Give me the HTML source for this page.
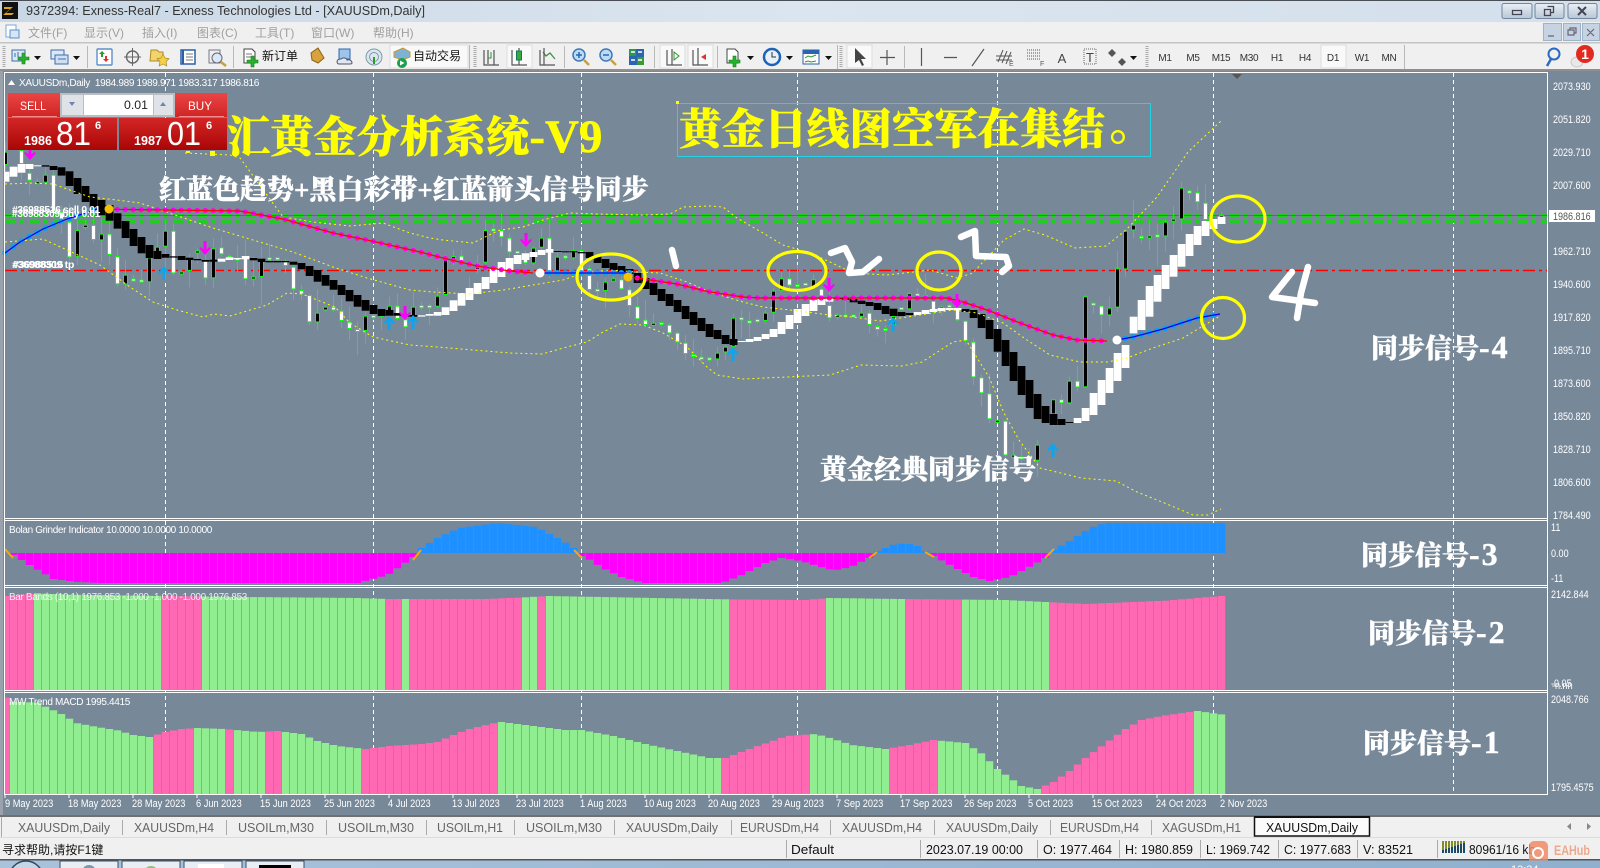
<!DOCTYPE html>
<html><head><meta charset="utf-8"><title>XAUUSDm,Daily</title>
<style>
html,body{margin:0;padding:0;background:#778899;width:1600px;height:868px;overflow:hidden}
svg{position:absolute;left:0;top:0;display:block}
text{font-family:"Liberation Sans","Noto Sans CJK SC",sans-serif;white-space:pre}
.m{font-size:12px;fill:#a0a0a0}
.tb{font-size:10px;fill:#333;text-anchor:middle;letter-spacing:-.3px}
.ax{font-size:11px;fill:#fff}
.dt{font-size:11px;fill:#fff}
.tab{font-size:13px;fill:#666}
.st{font-size:13px;fill:#111}
.lb{font-size:10px;fill:#fff;letter-spacing:-.35px}
.big{font-family:"Liberation Serif","Noto Serif CJK SC",serif;font-weight:900}
.w26{font-size:27px;fill:#fff;stroke:#fff;stroke-width:.4px}
.y42{font-size:43.200px;fill:#ff0;stroke:#ff0;stroke-width:.5px}
.dg{font-size:32px;letter-spacing:2px}
</style></head><body>
<svg width="1600" height="868" viewBox="0 0 1600 868">
<defs>
<linearGradient id="tg" x1="0" x2="1" y1="0" y2="0"><stop offset="0" stop-color="#c9d7e5"/><stop offset=".5" stop-color="#dbe5ef"/><stop offset="1" stop-color="#d3dfeb"/></linearGradient>
<linearGradient id="bt" x1="0" x2="0" y1="0" y2="1"><stop offset="0" stop-color="#e9eff5"/><stop offset="1" stop-color="#b8c6d6"/></linearGradient>
<linearGradient id="rd" x1="0" x2="0" y1="0" y2="1"><stop offset="0" stop-color="#ea4545"/><stop offset="1" stop-color="#cf2424"/></linearGradient>
<linearGradient id="rp" x1="0" x2="0" y1="0" y2="1"><stop offset="0" stop-color="#d42626"/><stop offset="1" stop-color="#a90606"/></linearGradient>
<linearGradient id="tk" x1="0" x2="1" y1="0" y2="0"><stop offset="0" stop-color="#a9c3dc"/><stop offset="1" stop-color="#8fb0cf"/></linearGradient>
</defs>

<!-- chart background -->
<rect x="0" y="70" width="1600" height="747" fill="#778899"/>
<rect x="0" y="70" width="3" height="747" fill="#9aa3ad"/>

<!-- generated chart geometry -->
<g id="chart"></g>

<!-- frame lines -->
<g stroke="#fff" stroke-width="1" fill="none">
<path d="M4 72.5H1548M4 518.5H1548M4 520.5H1548M4 585.5H1548M4 587.5H1548M4 690.5H1548M4 692.5H1548M4 794.5H1548M4.5 72V795M1547.5 72V795"/>
</g>
<path d="M1232 74h10l-5 5z" fill="#555"/>

<!-- handwritten numerals -->
<g fill="none" stroke="#fff" stroke-width="6.5" stroke-linecap="round" stroke-linejoin="round">
<path d="M672 250L676 266"/>
<path d="M831 253L845 248L852 262L849 273L863 272L879 259"/>
<path d="M961 237L975 231L976 256L1006 257L1009 266L1002 272"/>
<path d="M1292 272L1272 297L1315 303M1308 267L1301 293L1297 318"/>
</g>

<!-- yellow circles -->
<g fill="none" stroke="#ff0" stroke-width="3.2">
<ellipse cx="611" cy="277" rx="34" ry="23"/>
<ellipse cx="797" cy="271" rx="29" ry="19.5"/>
<ellipse cx="939" cy="271" rx="22" ry="19"/>
<ellipse cx="1238" cy="219" rx="27" ry="23"/>
<ellipse cx="1223" cy="318" rx="21.5" ry="20.5"/>
</g>

<!-- big overlay text -->
<rect x="186" y="151" width="4" height="2" fill="#ff0"/><rect x="210" y="151" width="5" height="5" fill="#ff0"/>
<text class="big y42" x="227" y="152">汇黄金分析系统<tspan font-size="47">-V9</tspan></text>
<rect x="677.5" y="103.5" width="473" height="53" fill="none" stroke="#22d3e6" stroke-width="1"/>
<rect x="676" y="101" width="3" height="3" fill="#ff0"/>
<text class="big y42" x="679" y="144" style="font-size:42.600px">黄金日线图空军在集结</text>
<text x="1109" y="141" font-size="46" fill="#ff0" style="font-family:'Noto Sans CJK SC',sans-serif">。</text>
<text class="big w26" x="159" y="199">红蓝色趋势+黑白彩带+红蓝箭头信号同步</text>
<text class="big w26" x="820" y="479">黄金经典同步信号</text>
<text class="big w26" x="1371" y="358">同步信号<tspan class="dg">-4</tspan></text>
<text class="big w26" x="1361" y="565">同步信号<tspan class="dg">-3</tspan></text>
<text class="big w26" x="1368" y="643">同步信号<tspan class="dg">-2</tspan></text>
<text class="big w26" x="1363" y="753">同步信号<tspan class="dg">-1</tspan></text>

<!-- chart labels -->
<path d="M8 85l3.5-5 3.5 5z" fill="#fff"/>
<text class="lb" x="19" y="86" textLength="240" lengthAdjust="spacingAndGlyphs">XAUUSDm,Daily  1984.989 1989.971 1983.317 1986.816</text>
<text class="lb" x="9" y="533" textLength="203" lengthAdjust="spacingAndGlyphs">Bolan Grinder Indicator 10.0000 10.0000 10.0000</text>
<text class="lb" x="9" y="600" textLength="238" lengthAdjust="spacingAndGlyphs" fill-opacity=".85">Bar Bands (10,1) 1976.853 -1.000 -1.000 -1.000 1976.853</text>
<text class="lb" x="9" y="705" textLength="121" lengthAdjust="spacingAndGlyphs">MW Trend MACD 1995.4415</text>
<text class="lb" x="12" y="213" font-weight="bold" textLength="88" lengthAdjust="spacingAndGlyphs">#36988516 sell 0.01</text>
<text class="lb" x="12" y="217" font-weight="bold" textLength="88" lengthAdjust="spacingAndGlyphs">#36988309 buy 0.01</text>
<text class="lb" x="12" y="268" font-weight="bold" textLength="62" lengthAdjust="spacingAndGlyphs">#36988309 tp</text>
<text class="lb" x="13" y="268" font-weight="bold" textLength="50" lengthAdjust="spacingAndGlyphs">#36988516</text>

<!-- price axis -->
<g>
<text class="ax" x="1553" y="90">2073.930</text>
<text class="ax" x="1553" y="123">2051.820</text>
<text class="ax" x="1553" y="156">2029.710</text>
<text class="ax" x="1553" y="189">2007.600</text>
<text class="ax" x="1553" y="255">1962.710</text>
<text class="ax" x="1553" y="288">1940.600</text>
<text class="ax" x="1553" y="321">1917.820</text>
<text class="ax" x="1553" y="354">1895.710</text>
<text class="ax" x="1553" y="387">1873.600</text>
<text class="ax" x="1553" y="420">1850.820</text>
<text class="ax" x="1553" y="453">1828.710</text>
<text class="ax" x="1553" y="486">1806.600</text>
<text class="ax" x="1553" y="519">1784.490</text>
<rect x="1549" y="210" width="46" height="12" fill="#fff"/>
<text class="ax" x="1553" y="220" style="fill:#555">1986.816</text>
<text class="ax" x="1551" y="531">11</text>
<text class="ax" x="1551" y="557">0.00</text>
<text class="ax" x="1551" y="582">-11</text>
<text class="ax" x="1551" y="598">2142.844</text>
<text class="ax" x="1551" y="687">-0.05</text>
<text class="ax" x="1552" y="689">-n.nn</text>
<text class="ax" x="1551" y="703">2048.766</text>
<text class="ax" x="1551" y="791">1795.4575</text>
</g>

<!-- date axis -->
<text class="dt" x="5" y="807">9 May 2023</text>
<text class="dt" x="68" y="807">18 May 2023</text>
<text class="dt" x="132" y="807">28 May 2023</text>
<text class="dt" x="196" y="807">6 Jun 2023</text>
<text class="dt" x="260" y="807">15 Jun 2023</text>
<text class="dt" x="324" y="807">25 Jun 2023</text>
<text class="dt" x="388" y="807">4 Jul 2023</text>
<text class="dt" x="452" y="807">13 Jul 2023</text>
<text class="dt" x="516" y="807">23 Jul 2023</text>
<text class="dt" x="580" y="807">1 Aug 2023</text>
<text class="dt" x="644" y="807">10 Aug 2023</text>
<text class="dt" x="708" y="807">20 Aug 2023</text>
<text class="dt" x="772" y="807">29 Aug 2023</text>
<text class="dt" x="836" y="807">7 Sep 2023</text>
<text class="dt" x="900" y="807">17 Sep 2023</text>
<text class="dt" x="964" y="807">26 Sep 2023</text>
<text class="dt" x="1028" y="807">5 Oct 2023</text>
<text class="dt" x="1092" y="807">15 Oct 2023</text>
<text class="dt" x="1156" y="807">24 Oct 2023</text>
<text class="dt" x="1220" y="807">2 Nov 2023</text>
<path d="M5 795v3M69 795v3M133 795v3M197 795v3M261 795v3M325 795v3M389 795v3M453 795v3M517 795v3M581 795v3M645 795v3M709 795v3M773 795v3M837 795v3M901 795v3M965 795v3M1029 795v3M1093 795v3M1157 795v3M1221 795v3" stroke="#fff"/>

<!-- trade panel -->
<rect x="8" y="93" width="52" height="24" fill="url(#rd)"/>
<rect x="12" y="116" width="45" height="1" fill="#f08a8a"/>
<rect x="175" y="93" width="52" height="24" fill="url(#rd)"/>
<rect x="179" y="116" width="45" height="1" fill="#f08a8a"/>
<rect x="60" y="93" width="115" height="24" fill="#b8bec4"/>
<rect x="62" y="95" width="21" height="20" fill="#dfe3e7"/>
<rect x="154" y="95" width="19" height="20" fill="#dfe3e7"/>
<rect x="84" y="95" width="69" height="20" fill="#fff"/>
<path d="M69 102h6l-3 4zM160 106h6l-3-4z" fill="#6f84b0"/>
<text x="148" y="109" font-size="12" fill="#222" text-anchor="end" textLength="24" lengthAdjust="spacingAndGlyphs">0.01</text>
<text x="20" y="110" font-size="12" fill="#fff" textLength="26" lengthAdjust="spacingAndGlyphs">SELL</text>
<text x="188" y="110" font-size="12" fill="#fff" textLength="24" lengthAdjust="spacingAndGlyphs">BUY</text>
<rect x="8" y="118" width="109" height="32" fill="url(#rp)"/>
<rect x="119" y="118" width="108" height="32" fill="url(#rp)"/>
<text x="24" y="145" font-size="13" font-weight="bold" fill="#fff" textLength="28" lengthAdjust="spacingAndGlyphs">1986</text>
<text x="56" y="145" font-size="33" fill="#fff" textLength="35" lengthAdjust="spacingAndGlyphs">81</text>
<text x="95" y="129" font-size="11" font-weight="bold" fill="#fff">6</text>
<text x="134" y="145" font-size="13" font-weight="bold" fill="#fff" textLength="28" lengthAdjust="spacingAndGlyphs">1987</text>
<text x="167" y="145" font-size="33" fill="#fff" textLength="34" lengthAdjust="spacingAndGlyphs">01</text>
<text x="206" y="129" font-size="11" font-weight="bold" fill="#fff">6</text>

<!-- title bar -->
<rect x="0" y="0" width="1600" height="22" fill="url(#tg)"/>
<rect x="0" y="0" width="1600" height="1" fill="#4a4f55"/>
<rect x="2" y="2" width="16" height="17" fill="#111"/>
<path d="M4 7h9l-7 6h8l-2 2H3l7-6H4z" fill="#d9a520"/>
<text x="26" y="15" font-size="12.5" fill="#333" textLength="399" lengthAdjust="spacingAndGlyphs">9372394: Exness-Real7 - Exness Technologies Ltd - [XAUUSDm,Daily]</text>
<g stroke="#71869e" fill="url(#bt)"><rect x="1502" y="3.5" width="30" height="15" rx="2"/><rect x="1535" y="3.5" width="29" height="15" rx="2"/><rect x="1568" y="3.5" width="29" height="15" rx="2"/></g>
<path d="M1512.5 10.5h9v4h-9zM1544.5 9.5h6v6h-6zM1547.5 6.5h6v6h-3" fill="none" stroke="#445" stroke-width="1.3"/>
<path d="M1578 7l8 8M1586 7l-8 8" stroke="#445" stroke-width="2"/>

<!-- menu bar -->
<rect x="0" y="22" width="1600" height="21" fill="#f0f0f0"/>
<rect x="6" y="25" width="10" height="12" fill="#fff" stroke="#7aa7d8"/>
<rect x="10" y="30" width="9" height="8" fill="#d5e6f8" stroke="#5b8fc9"/>
<text class="m" x="28" y="37">文件(F)</text>
<text class="m" x="84" y="37">显示(V)</text>
<text class="m" x="142" y="37">插入(I)</text>
<text class="m" x="197" y="37">图表(C)</text>
<text class="m" x="255" y="37">工具(T)</text>
<text class="m" x="311" y="37">窗口(W)</text>
<text class="m" x="373" y="37">帮助(H)</text>
<g fill="#c6d3e3" stroke="#9fb2c8"><rect x="1543.5" y="23.5" width="18" height="17"/><rect x="1563.5" y="23.5" width="17" height="17"/><rect x="1582.5" y="23.5" width="17" height="17"/></g>
<path d="M1548 36h6M1568 30h6v5h-6zM1570 30v-2h6v5h-2M1587 29l7 7M1594 29l-7 7" stroke="#667" fill="none" stroke-width="1.2"/>

<!-- toolbar -->
<rect x="0" y="43" width="1600" height="27" fill="#f0f0f0"/>
<rect x="0" y="42" width="1600" height="1.5" fill="#c4c4c4"/>
<rect x="0" y="69" width="1600" height="2" fill="#8f8f8f"/>
<rect x="507" y="45" width="25" height="23" fill="#f9f9f9" stroke="#ddd"/>
<rect x="390" y="45" width="78" height="23" fill="#f9f9f9" stroke="#ddd"/>
<rect x="660" y="45" width="25" height="23" fill="#f9f9f9" stroke="#ddd"/>
<rect x="688" y="45" width="25" height="23" fill="#f9f9f9" stroke="#ddd"/>
<rect x="847" y="45" width="25" height="23" fill="#f9f9f9" stroke="#ddd"/>
<rect x="1321" y="45" width="25" height="23" fill="#f9f9f9" stroke="#ddd"/>
<path d="M87.5 46v22M233.5 46v22M469.5 45v24M564.5 46v22M654.5 46v22M717.5 46v22M837.5 45v24M904.5 46v22M1404.5 45v24" stroke="#b8b8b8"/>
<path d="M4 46v22M475 46v22M841 46v22M1147 46v22" stroke="#aaa" stroke-width="3" stroke-dasharray="1 1"/>
<!-- new chart -->
<path d="M12 50h13v11H12z" fill="#dbe8f7" stroke="#3e6ea8"/><path d="M15 53v4M18 52v5" stroke="#3e6ea8"/>
<path d="M22 53h3v4h4v3h-4v4h-3v-4h-4v-3h4z" fill="#27b32b" stroke="#177a1a" stroke-width=".6"/>
<path d="M34 56h7l-3.5 4zM73 56h7l-3.5 4z" fill="#111"/>
<!-- profiles -->
<path d="M51 50h13v9H51z" fill="#dbe8f7" stroke="#3e6ea8"/><path d="M55 55h13v9H55z" fill="#cfe0f5" stroke="#3e6ea8"/><path d="M58 59h8" stroke="#3e6ea8"/>
<!-- market watch -->
<rect x="97" y="49" width="15" height="16" rx="1" fill="#fff" stroke="#5c8fc8" stroke-width="1.4"/>
<path d="M102 51l3 3h-2v3h-2v-3h-2z" fill="#2a9a2a"/><path d="M106 62l-3-3h2v-3h2v3h2z" fill="#d33"/>
<!-- crosshair -->
<circle cx="132.500" cy="57" r="6" fill="none" stroke="#666" stroke-width="1.4"/><path d="M132.500 48v18M124 57h17" stroke="#666"/>
<!-- folder star -->
<path d="M151 50h6l2 2h4v9h-13z" fill="#f2d46f" stroke="#b08a20"/><path d="M163 54l2 4 4 .6-3 3 .8 4.400-3.800-2-3.800 2 .8-4.400-3-3 4-.6z" fill="#f6d046" stroke="#a98a1c" stroke-width=".7"/>
<!-- navigator -->
<rect x="181" y="50" width="14" height="14" fill="#fff" stroke="#2a5fa8" stroke-width="1.500"/><path d="M183 50v14" stroke="#2a5fa8" stroke-width="2"/><path d="M186 54h7M186 57h7M186 60h7" stroke="#777"/>
<!-- tester -->
<rect x="209" y="50" width="11" height="13" fill="#eee" stroke="#778"/><circle cx="217" cy="58" r="5" fill="#dbe8f7" stroke="#667"/><path d="M221 62l5 4" stroke="#c8a23a" stroke-width="2.500"/>
<!-- new order -->
<path d="M244 49h8l3 3v11h-11z" fill="#fff" stroke="#444"/><path d="M246 54h6M246 57h6" stroke="#777"/>
<path d="M251 56h3v4h4v3h-4v4h-3v-4h-4v-3h4z" fill="#27b32b" stroke="#177a1a" stroke-width=".6"/>
<text x="262" y="60" font-size="12" fill="#111">新订单</text>
<!-- gold / terminal -->
<path d="M311 53l7-5 6 10-6 5-6-3z" fill="#d8a23c" stroke="#8a6216"/>
<rect x="339" y="49" width="11" height="10" fill="#9fc4ea" stroke="#2a66b0"/><path d="M337 62c0-3 3-3 4-3 2-2 6-1 6 1 3-1 5 1 5 3 0 1-1 1-2 1h-11c-1 0-2-1-2-2z" fill="#dfe8f2" stroke="#556"/>
<circle cx="374" cy="57" r="8" fill="#dbe7ef" stroke="#7d9aa8"/><circle cx="374" cy="57" r="4.500" fill="none" stroke="#7d9aa8"/><path d="M374 57v7" stroke="#2a9a2a" stroke-width="2"/>
<!-- auto trade -->
<path d="M394 52l9-4 7 4v5l-8 3-8-3z" fill="#7fb1d5" stroke="#c09a30"/><circle cx="402" cy="63" r="5" fill="#1aa04a"/><path d="M400 60.500l4.500 2.500-4.500 2.500z" fill="#fff"/>
<text x="413" y="60" font-size="12" fill="#111">自动交易</text>
<!-- chart types -->
<g fill="none" stroke="#555" stroke-width="1.2">
<path d="M484 50v15h15M494 50v15M488 50v14"/>
<path d="M512 50v15h15M519 48v17"/><path d="M540 50v15h15"/><path d="M543 52l3 4 4-3 5 6" stroke="#3c8a3c"/><path d="M544 48v17" />
</g>
<path d="M491 52v6h-3" stroke="#2a9a2a" fill="none"/>
<rect x="516.500" y="51" width="5" height="9" fill="#3aa83a" stroke="#175"/>
<!-- zoom -->
<circle cx="579" cy="55" r="6" fill="#bcdcf5" stroke="#3f78b5" stroke-width="1.500"/><path d="M576 55h6M579 52v6" stroke="#2a66b0" stroke-width="1.500"/><path d="M584 60l5 5" stroke="#c9a23a" stroke-width="2.500"/>
<circle cx="606" cy="55" r="6" fill="#bcdcf5" stroke="#3f78b5" stroke-width="1.500"/><path d="M603 55h6" stroke="#2a66b0" stroke-width="1.500"/><path d="M611 60l5 5" stroke="#c9a23a" stroke-width="2.500"/>
<!-- tile -->
<rect x="629" y="49" width="15" height="16" fill="#2a66b0"/><rect x="629" y="49" width="7" height="7" fill="#2a9a4a"/><rect x="637" y="57" width="7" height="8" fill="#3a9a3a"/><path d="M631 52h4M638 52h4M631 60h4M638 60h4" stroke="#fff" stroke-width="1.500"/>
<!-- shift/scroll -->
<g fill="none" stroke="#555" stroke-width="1.2"><path d="M667 50v15h15M693 50v15h15M698 48v17"/><path d="M672 49v16"/></g>
<path d="M674 52l5 4-5 4z" fill="none" stroke="#2a9a2a"/><path d="M706 54l-5 3 5 3z" fill="#d33"/>
<!-- add indicator -->
<path d="M727 49h8l3 3v11h-11z" fill="#fff" stroke="#444"/><path d="M733 56h3v4h4v3h-4v4h-3v-4h-4v-3h4z" fill="#27b32b" stroke="#177a1a" stroke-width=".6"/>
<path d="M747 56h7l-3.500 4zM786 56h7l-3.500 4zM825 56h7l-3.500 4zM1130 56h7l-3.500 4z" fill="#111"/>
<!-- clock -->
<circle cx="772" cy="57" r="8" fill="#e8f1fa" stroke="#1c63b5" stroke-width="2.500"/><path d="M772 52v5h4" stroke="#333" fill="none"/>
<!-- templates -->
<rect x="803" y="50" width="16" height="14" fill="#fff" stroke="#2a5fa8"/><rect x="803" y="50" width="16" height="4" fill="#2a66b0"/><path d="M805 58l3-2 3 1 5-2M805 62l3-1 3 1 5-1" stroke="#2a9a2a" fill="none"/>
<!-- tools -->
<path d="M855 48v15l4-3 3 6 2-1-3-6h5z" fill="#444"/>
<path d="M887 50v15M880 57.500h15M921.500 48v18M944 57.500h13M972 66l12-17" stroke="#555" stroke-width="1.200" fill="none"/>
<path d="M998 62l5-12M1002 63l5-12M1006 64l5-12M996 56h16M996 60h16" stroke="#555" fill="none"/>
<path d="M1027 50h13M1027 53h13M1027 56h13M1027 59h13" stroke="#555" stroke-dasharray="1 1" fill="none"/>
<text x="1040" y="66" font-size="7" fill="#555">F</text><text x="1009" y="66" font-size="7" fill="#555">E</text>
<text x="1062" y="63" font-size="13" fill="#444" text-anchor="middle">A</text>
<rect x="1084" y="49" width="12" height="15" fill="none" stroke="#666" stroke-dasharray="1 1"/><text x="1090" y="62" font-size="13" fill="#444" text-anchor="middle">T</text>
<path d="M1112 50l4 4-4 4-4-4zM1122 59l4 4-4 4-4-4z" fill="#555" transform="translate(0,-1)"/>
<text class="tb" x="1165" y="61">M1</text><text class="tb" x="1193" y="61">M5</text><text class="tb" x="1221" y="61">M15</text><text class="tb" x="1249" y="61">M30</text><text class="tb" x="1277" y="61">H1</text><text class="tb" x="1305" y="61">H4</text><text class="tb" x="1333" y="61">D1</text><text class="tb" x="1362" y="61">W1</text><text class="tb" x="1389" y="61">MN</text>
<circle cx="1554" cy="54" r="5.500" fill="none" stroke="#2a6bc0" stroke-width="2"/><path d="M1551 59l-4 7" stroke="#2a6bc0" stroke-width="2.500"/>
<ellipse cx="1577" cy="62" rx="6" ry="5" fill="#e8e8e8" stroke="#ccc"/>
<circle cx="1585" cy="54" r="9" fill="#e22b20"/><text x="1585" y="59" font-size="14" fill="#fff" font-weight="bold" text-anchor="middle">1</text>

<!-- tabs -->
<rect x="0" y="815" width="1600" height="23" fill="#f0f0f0"/>
<rect x="0" y="815" width="1600" height="2" fill="#707070"/>
<path d="M1.500 817v20M122.500 820v15M226.500 820v15M326.500 820v15M426.500 820v15M514.500 820v15M614.500 820v15M731.500 820v15M830.500 820v15M934.500 820v15M1050.500 820v15M1151.500 820v15" stroke="#aaa"/>
<text class="tab" x="18" y="832" textLength="92" lengthAdjust="spacingAndGlyphs">XAUUSDm,Daily</text>
<text class="tab" x="134" y="832" textLength="80" lengthAdjust="spacingAndGlyphs">XAUUSDm,H4</text>
<text class="tab" x="238" y="832" textLength="76" lengthAdjust="spacingAndGlyphs">USOILm,M30</text>
<text class="tab" x="338" y="832" textLength="76" lengthAdjust="spacingAndGlyphs">USOILm,M30</text>
<text class="tab" x="437" y="832" textLength="66" lengthAdjust="spacingAndGlyphs">USOILm,H1</text>
<text class="tab" x="526" y="832" textLength="76" lengthAdjust="spacingAndGlyphs">USOILm,M30</text>
<text class="tab" x="626" y="832" textLength="92" lengthAdjust="spacingAndGlyphs">XAUUSDm,Daily</text>
<text class="tab" x="740" y="832" textLength="79" lengthAdjust="spacingAndGlyphs">EURUSDm,H4</text>
<text class="tab" x="842" y="832" textLength="80" lengthAdjust="spacingAndGlyphs">XAUUSDm,H4</text>
<text class="tab" x="946" y="832" textLength="92" lengthAdjust="spacingAndGlyphs">XAUUSDm,Daily</text>
<text class="tab" x="1060" y="832" textLength="79" lengthAdjust="spacingAndGlyphs">EURUSDm,H4</text>
<text class="tab" x="1162" y="832" textLength="79" lengthAdjust="spacingAndGlyphs">XAGUSDm,H1</text>
<path d="M1254.500 817v19h115v-19" fill="#fbfbfb" stroke="#111" stroke-width="1.500"/>
<rect x="1254" y="816" width="116" height="2" fill="#111"/>
<text class="tab" x="1266" y="832" style="fill:#111" textLength="92" lengthAdjust="spacingAndGlyphs">XAUUSDm,Daily</text>
<path d="M1571 823v7l-4-3.500zM1587 823v7l4-3.500z" fill="#888"/>

<!-- status -->
<rect x="0" y="838" width="1600" height="22" fill="#f0f0f0"/>
<rect x="0" y="837" width="1600" height="1" fill="#ddd"/>
<rect x="0" y="859" width="1600" height="1.500" fill="#555"/>
<text class="st" x="2" y="854" style="font-size:12px">寻求帮助,请按F1键</text>
<path d="M786.500 840v18M920.500 840v18M1037.500 840v18M1119.500 840v18M1200.500 840v18M1278.500 840v18M1357.500 840v18M1437.500 840v18" stroke="#aaa"/>
<text class="st" x="791" y="854" textLength="43" lengthAdjust="spacingAndGlyphs">Default</text>
<text class="st" x="926" y="854" textLength="97" lengthAdjust="spacingAndGlyphs">2023.07.19 00:00</text>
<text class="st" x="1043" y="854" textLength="69" lengthAdjust="spacingAndGlyphs">O: 1977.464</text>
<text class="st" x="1125" y="854" textLength="68" lengthAdjust="spacingAndGlyphs">H: 1980.859</text>
<text class="st" x="1206" y="854" textLength="64" lengthAdjust="spacingAndGlyphs">L: 1969.742</text>
<text class="st" x="1284" y="854" textLength="67" lengthAdjust="spacingAndGlyphs">C: 1977.683</text>
<text class="st" x="1363" y="854" textLength="50" lengthAdjust="spacingAndGlyphs">V: 83521</text>
<path d="M1443 853v-12M1446 853v-12M1449 853v-12M1452 853v-12M1455 853v-12M1458 853v-12M1461 853v-12M1464 853v-12" stroke="#7f8c2a" stroke-width="2"/>
<path d="M1443 853v-3M1446 853v-4M1449 853v-5M1452 853v-6M1455 853v-7M1458 853v-8M1461 853v-9M1464 853v-10" stroke="#1c4a66" stroke-width="2"/>
<text class="st" x="1469" y="854" textLength="66" lengthAdjust="spacingAndGlyphs">80961/16 kb</text>
<rect x="1529" y="841" width="19" height="24" rx="5" fill="#f08a66" fill-opacity=".85"/>
<circle cx="1538" cy="853" r="5" fill="none" stroke="#fff" stroke-width="2"/>
<text x="1554" y="855" font-size="14" font-weight="bold" fill="#eda78d" textLength="36" lengthAdjust="spacingAndGlyphs">EAHub</text>

<!-- taskbar -->
<rect x="0" y="860.500" width="1600" height="7.500" fill="url(#tk)"/>
<circle cx="26" cy="878" r="17" fill="#c5d6e6" stroke="#2a4a6a" stroke-width="1.500"/>
<g fill="#e8eef4" stroke="#3a5068"><rect x="60" y="861" width="58" height="12"/><rect x="122" y="861" width="58" height="12"/><rect x="184" y="861" width="58" height="12"/><rect x="246" y="861" width="58" height="12"/></g>
<circle cx="89" cy="872" r="7" fill="#7d97ad"/><circle cx="151" cy="873" r="7" fill="#8fbf7a"/><rect x="198" y="864" width="26" height="8" fill="#fff"/><rect x="259" y="865" width="32" height="6" fill="#000"/>
<text x="1511" y="873" font-size="11" fill="#fff">13:34</text>
</svg>

<script>
(function(){
var s='';
function R(x,y,w,h,f){if(h<=0||w<=0)return;s+='<rect x="'+x+'" y="'+y.toFixed(1)+'" width="'+w+'" height="'+h.toFixed(1)+'" fill="'+f+'"/>';}
function L(p,x){if(x<=p[0][0])return p[0][1];for(var i=1;i<p.length;i++){if(x<=p[i][0]){var a=p[i-1],b=p[i];return a[1]+(b[1]-a[1])*(x-a[0])/(b[0]-a[0]);}}return p[p.length-1][1];}
function inR(k,r){for(var i=0;i<r.length;i++)if(k>=r[i][0]&&k<=r[i][1])return true;return false;}
var W=7.4;
function BX(k){return 1.8+8*k;}
/* vertical grid */
[165,373,581,797,997,1213,1453].forEach(function(x){s+='<path d="M'+(x+.5)+' 73V794" stroke="#fff" stroke-dasharray="4 3"/>';});
/* horizontal levels */
for(var gx=5;gx<1547;gx+=24){
 [213,219].forEach(function(gy){
  R(gx,gy,Math.min(10,1547-gx),4,'#22cc22');
  if(gx+15<1547)R(gx+15,gy,Math.min(4,1547-gx-15),4,'#22cc22');
 });
}
s+='<rect x="5" y="215" width="1542" height="1" fill="#666"/>';
s+='<path d="M5 270.500H1547" stroke="#f00" stroke-width="1.500" stroke-dasharray="12 4 3 4"/>';
/* Panel 1 grinder */
var G=[[1,-2],[3,-12],[6,-26],[9,-29],[12,-30],[44,-30],[47.800,-22],[50.300,-8],[51,-4]];
var G2=[[52,5],[54,15],[56.700,25],[61.500,30],[66.300,26],[69.500,13],[71,5]];
var G3=[[72.300,-3],[74.600,-15],[77,-24],[79.700,-30],[89.600,-30],[91.800,-23],[95,-10],[97,-5],[99.400,-8],[101.900,-14],[103.500,-17.500],[105.700,-14],[108,-5]];
var G4=[[109.200,2],[110.800,8],[112.400,10],[114,7],[115,2]];
var G5=[[116,-3],[118.500,-14],[121,-24],[123,-28],[125.600,-24],[128.200,-13],[130,-5]];
var G6=[[131,3],[133,12],[135.600,25],[137.500,30],[152,30]];
function pan1(p,a,b){for(var k=a;k<=b;k++){var v=L(p,k);var x=Math.max(BX(k),5);if(v<0)R(x,553,W,-v,'#f0f');else R(x,553-v,W,v,'#1e90ff');}}
pan1(G,1,51);pan1(G2,52,71);pan1(G3,72,108);pan1(G4,109,115);pan1(G5,116,130);pan1(G6,131,152);
/* orange links */
[[5,549,13,558],[413,560,421,550],[574,550,582,558],[869,558,877,552],[925,552,934,557],[1045,558,1054,549]].forEach(function(a){s+='<path d="M'+a[0]+' '+a[1]+'L'+a[2]+' '+a[3]+'" stroke="#ffa500" stroke-width="2"/>';});
/* Panel 2 */
var P2=[[0,48],[4,40],[8,44],[20,48],[30,51],[44,54],[48,57],[60,57],[64,53],[68,48],[90,58],[100,60],[103,54],[112,57],[125,60],[130,66],[135,72],[145,62],[152,48]];
var PK2=[[0,3],[20,24],[48,49],[51,64],[67,67],[91,102],[113,119],[131,152]];
/* Panel 3 */
var P3=[[0,353],[1,365],[4,368],[5,380],[7,402],[9,430],[11.500,441],[14,451],[16,465],[18,471],[20,456],[22,447],[24,444],[27.500,447],[31.500,456],[34,453],[37,462],[39,483],[41.500,498],[45,507],[48,498],[52,492],[54,486],[56,465],[58,447],[61,430],[62,426],[66,438],[70,450],[72,450],[76,468],[80,492],[84,513],[88,534],[90,534],[93,507],[97.700,468],[99.400,465],[101.300,462],[103.900,480],[105.800,495],[110,507],[113,495],[116,480],[120,489],[122,520],[124,567],[127,618],[129,627],[131,606],[133,573],[135,534],[137.500,490],[140,447],[142,420],[144.500,408],[149,393],[152.500,405]];
var PK3=[[0,0],[19,23],[28,28],[33,34],[45,61],[90,100],[111,116],[130,148]];
for(var k=0;k<=152;k++){
 var x=BX(k),w=W;if(x<5){w=W-(5-x);x=5;}
 var t2=580+L(P2,k)/3;R(x,t2,w,690-t2,inR(k,PK2)?'#ff69b4':'#90ee90');
 var t3=580+L(P3,k)/3;R(x,t3,w,794-t3,inR(k,PK3)?'#ff69b4':'#90ee90');
}
/* candles: k,wickTop,bodyTop,bodyBot,wickBot,white */
function C(base,arr){arr.forEach(function(a){
 var k=a[0],cx=5+8*k,wt=base+a[1]/3,t=base+a[2]/3,b=base+a[3]/3,wb=base+a[4]/3;
 if(b-t<3){var m=(t+b)/2;t=m-1.500;b=m+1.500;}
 R(cx,wt,1,wb-wt,'#0f0');
 R(cx-2,t,5,b-t,'#0f0');
 R(cx-1,t+1,3,b-t-2,a[5]?'#fff':'#000');
});}
C(140,[[0,5,35,75,120,0],[2,0,30,72,120,1],[3,85,98,122,165,1],[4,115,126,130,133,0],[5,80,104,128,130,0],[6,90,104,215,235,1],[7,195,215,245,280,1],[8,190,245,352,370,1],[9,240,270,350,375,0],[10,240,254,264,270,0],[11,210,255,300,310,1],[12,235,281,301,365,0],[13,245,281,345,375,1],[14,325,348,433,440,1],[15,360,404,433,450,0],[16,405,419,421,425,1],[17,390,420,426,430,1],[18,330,352,427,470,0],[19,280,320,356,360,0],[20,240,272,320,420,0],[21,250,272,400,405,1],[22,390,396,402,405,0],[23,340,353,393,442,0],[24,325,332,340,370,0],[25,325,362,415,435,1],[26,295,325,415,445,0],[27,290,322,343,350,1],[28,343,350,354,360,1],[29,315,357,358,395,1],[30,300,348,418,435,1],[31,350,412,416,440,0],[32,320,358,411,495,0],[33,310,355,358,365,1],[34,350,355,357,365,1],[35,355,362,378,400,1],[36,375,380,448,480,1],[37,435,450,463,480,1],[38,462,465,547,555,1],[39,448,518,547,570,0],[40,495,500,511,515,0],[41,465,500,511,515,1],[42,475,512,543,565,1],[43,500,545,567,600,1],[44,545,569,574,645,1],[45,515,527,573,610,0],[46,515,528,532,540,1],[47,510,510,530,570,0],[48,470,497,527,570,0],[49,460,497,537,540,1],[50,500,538,562,600,1]]);
C(190,[[51,305,350,378,385,0],[52,335,349,351,360,1],[53,340,349,351,405,1],[54,292,317,350,355,0],[55,195,208,315,320,0],[56,180,198,218,225,0],[57,180,197,215,225,1],[58,260,296,299,330,1],[59,195,220,240,250,0],[60,90,120,218,225,0],[61,100,119,121,155,1],[62,70,120,142,170,1],[63,130,143,187,205,1],[64,185,186,188,195,1],[65,180,190,220,225,1],[66,168,173,220,225,0],[67,115,143,173,190,0],[68,90,143,248,265,1],[69,180,200,248,255,0],[70,190,197,205,210,1],[71,140,180,205,210,0],[72,165,180,250,260,1],[73,225,235,300,320,1],[74,275,300,302,330,1],[75,265,275,303,355,0],[76,250,268,272,275,0],[77,245,268,298,300,1],[78,290,298,348,380,1],[79,320,349,388,400,1],[80,330,389,405,410,1],[81,370,401,405,410,0],[82,395,400,402,410,1],[83,400,404,430,450,1],[84,425,428,457,480,1],[85,435,458,492,510,1],[86,447,493,500,530,1],[87,477,502,507,520,1],[88,500,506,508,515,1],[89,470,488,508,530,0],[90,465,470,487,510,0],[91,370,383,470,475,0],[92,360,383,390,445,1],[93,365,392,400,445,1],[94,385,391,393,400,1],[95,360,368,393,400,0],[96,295,302,368,395,0],[97,245,265,302,305,0],[98,240,265,287,300,1],[99,225,286,288,295,1],[100,280,282,284,288,1],[101,255,268,293,298,0],[102,290,296,320,330,1]]);
C(230,[[103,145,225,265,275,1],[104,250,254,263,270,0],[105,210,256,260,265,1],[106,255,257,259,262,1],[107,225,248,260,265,0],[108,240,248,285,310,1],[109,285,288,300,320,1],[110,285,298,300,340,1],[111,240,258,285,300,0],[112,232,235,237,240,1],[113,185,190,238,242,0],[114,175,190,200,205,1],[115,132,198,200,205,1],[116,200,212,247,280,1],[117,225,230,245,255,0],[118,222,226,232,236,1],[119,225,237,271,275,1],[120,268,272,333,345,1],[121,325,335,442,465,1],[122,432,442,490,530,1],[123,432,490,568,580,1],[124,570,572,576,580,0],[125,570,572,676,680,1],[126,635,677,680,695,0],[127,645,683,685,700,1],[128,655,686,688,720,1],[129,630,644,692,740,0],[131,508,508,553,590,0],[132,495,508,520,552,1],[133,440,452,520,523,0],[134,408,452,472,485,1],[135,195,199,472,475,0],[136,220,220,225,250,1],[137,227,227,256,310,1]]);
C(120,[[138,530,563,586,618,0],[139,393,445,563,575,0],[140,330,332,448,470,0],[141,240,314,331,355,0],[142,325,349,355,370,1],[143,300,347,355,390,0],[144,310,347,349,440,1],[145,300,305,349,395,0],[146,258,298,303,358,0],[147,185,203,298,332,0],[148,207,215,217,242,1],[149,198,217,247,270,1],[150,192,248,300,310,1],[151,300,320,322,360,1],[152,275,288,291,292,0]]);
/* Heiken-style band */
function H(base,arr){arr.forEach(function(a){var x=1.7+8*a[0],w=7.7;if(x<5){w-=5-x;x=5;}var t=base+a[1]/3,b=base+a[2]/3;R(x,t,w,b-t,a[3]?'#fff':'#000');});}
H(140,[[0,95,125,1],[1,80,110,1],[2,72,98,1],[3,72,87,1],[4,76,79,1],[5,76,80,0],[6,78,90,0],[7,82,107,0],[8,94,138,0],[9,114,162,0],[10,138,186,0],[11,162,204,0],[12,180,225,0],[13,195,242,0],[14,220,266,0],[15,243,294,0],[16,267,318,0],[17,291,340,0],[18,315,354,0],[19,333,357,0],[20,342,353,0],[21,349,353,0],[22,348,360,0],[23,353,360,0],[24,357,361,0],[25,360,365,0],[26,359,365,0],[27,356,365,1],[28,352,360,1],[29,354,358,1],[30,348,358,1],[31,354,361,0],[32,356,366,0],[33,363,367,0],[34,363,367,0],[35,363,367,0],[36,365,374,0],[37,369,388,0],[38,378,408,0],[39,390,425,0],[40,405,437,0],[41,420,449,0],[42,435,465,0],[43,450,484,0],[44,465,500,0],[45,480,512,0],[46,495,522,0],[47,507,528,0],[48,510,527,0],[49,519,527,0],[50,522,530,0],[51,525,530,0]]);
H(190,[[52,376,380,1],[53,372,377,1],[54,366,377,1],[55,352,375,1],[56,331,363,1],[57,309,347,1],[58,294,330,1],[59,279,312,1],[60,261,297,1],[61,237,279,1],[62,216,261,1],[63,204,240,1],[64,195,222,1],[65,190,210,1],[66,186,201,1],[67,180,195,1],[68,177,188,1],[69,183,186,0],[70,184,187,0],[71,184,187,0],[72,186,190,0],[73,186,204,0],[74,195,219,0],[75,207,234,0],[76,219,240,0],[77,228,246,0],[78,237,252,0],[79,249,279,0],[80,264,297,0],[81,279,315,0],[82,297,333,0],[83,312,348,0],[84,330,366,0],[85,348,387,0],[86,366,405,0],[87,384,423,0],[88,402,441,0],[89,420,447,0],[90,435,462,0],[91,447,465,0],[92,453,456,1],[93,447,456,1],[94,441,453,1],[95,432,447,1],[96,417,441,1],[97,396,432,1],[98,375,417,1],[99,357,399,1],[100,342,378,1],[101,330,363,1],[102,327,345,1]]);
H(230,[[103,205,215,1],[104,203,207,0],[105,205,209,0],[106,207,217,0],[107,212,222,0],[108,216,228,0],[109,219,240,0],[110,228,252,0],[111,236,258,0],[112,246,258,0],[113,249,255,0],[114,246,255,1],[115,240,252,1],[116,237,246,1],[117,234,243,1],[118,234,240,1],[119,234,240,1],[120,237,246,0],[121,240,264,0],[122,252,294,0],[123,270,327,0],[124,297,365,0],[125,330,408,0],[126,366,453,0],[127,408,495,0],[128,450,534,0],[129,492,567,0],[130,528,579,0],[131,552,585,0],[132,567,585,0],[133,576,579,0],[134,564,579,1],[135,534,573,1],[136,489,555,1],[137,450,525,1],[138,414,489,1],[139,369,453,1],[140,345,414,1]]);
H(120,[[141,590,640,1],[142,540,630,1],[143,498,590,1],[144,465,545,1],[145,435,507,1],[146,405,470,1],[147,372,440,1],[148,342,408,1],[149,318,375,1],[150,303,348,1],[151,297,327,1],[152,290,312,1]]);
/* yellow bands */
function B(p){s+='<polyline points="'+p.map(function(a){return a.join(',')}).join(' ')+'" fill="none" stroke="#ff0" stroke-width="1" stroke-dasharray="2 3"/>';}
B([[185,153],[230,155],[240,158],[283,217],[313,222],[350,226],[383,223],[410,233],[430,238],[443,240],[473,243],[483,238],[500,230],[523,227],[543,220],[570,213],[597,214],[643,215],[670,214],[683,207],[710,206],[723,207],[737,218],[763,233],[783,245],[810,253],[830,262],[853,273],[887,275],[913,272],[930,270],[957,278],[973,273],[983,262],[1004,240],[1024,229],[1045,235],[1075,248],[1106,246],[1126,230],[1157,197],[1188,152],[1221,121]]);
B([[5,184],[33,183],[53,184],[70,190],[90,197],[117,200],[140,203],[213,228],[293,252],[333,267],[367,278],[410,290],[433,292],[470,294],[503,290],[533,285],[563,280],[583,273],[610,270],[637,272],[660,273],[687,282],[710,292],[743,302],[763,307],[790,310],[830,315],[853,317],[880,321],[920,315],[953,310],[977,313],[1003,323],[1027,340],[1050,355],[1080,362],[1107,362],[1127,358],[1153,348],[1183,338],[1213,320],[1220,316]]);
B([[5,242],[43,239],[67,250],[100,265],[130,287],[153,302],[177,310],[203,317],[214,314],[230,316],[247,311],[267,305],[287,293],[302,294],[335,307],[350,323],[373,337],[410,345],[437,347],[473,350],[510,353],[542,354],[567,347],[587,342],[603,332],[620,324],[643,325],[663,333],[687,347],[707,367],[717,375],[743,379],[830,375],[861,365],[902,366],[922,362],[953,342],[966,340],[989,377],[1004,413],[1019,440],[1040,468],[1081,478],[1116,481],[1137,492],[1162,502],[1193,515],[1208,515],[1221,509]]);
/* trend lines */
var T1=[[109,209.300],[240,211],[283,219],[333,233],[367,240],[420,252],[443,258],[477,266],[510,271],[533,273]];
var T2=[[629,277],[637,278],[677,284],[710,292],[743,297],[760,298],[947,298],[963,302],[987,310],[1020,323],[1053,335],[1077,340],[1107,341]];
var U1=[[5,253],[20,242],[43,229],[67,219],[97,209]];
var U2=[[540,273],[630,273]];
var U3=[[1117,340],[1133,337],[1163,329],[1197,318],[1220,314]];
function line(p,c,dot){for(var k=0;k<=152;k++){var x=5.300+8*k;if(x>=p[0][0]&&x<=p[p.length-1][0]){s+='<circle cx="'+x+'" cy="'+L(p,x).toFixed(1)+'" r="'+dot[1]+'" fill="'+dot[0]+'"/>';}}
 s+='<polyline points="'+p.map(function(a){return a.join(',')}).join(' ')+'" fill="none" stroke="'+c+'" stroke-width="1.200"/>';}
line(T1,'#f00',['#f0f',2.600]);line(T2,'#f00',['#f0f',2.600]);
line(U1,'#00f',['#14a0e8',3]);line(U2,'#00f',['#14a0e8',3]);line(U3,'#00f',['#14a0e8',3]);
s+='<circle cx="109" cy="209" r="4.500" fill="#f5c000"/><circle cx="628" cy="277" r="4.500" fill="#f5c000"/><circle cx="540" cy="273" r="4.500" fill="#fff"/><circle cx="1117" cy="340" r="4.500" fill="#fff"/>';
/* arrows */
function up(x,y){s+='<path d="M'+x+' '+(y-7)+'l6 7-1.500 1-3-2.500v8.500h-3v-8.500l-3 2.500-1.500-1z" fill="#0ea5ef"/>';}
function dn(x,y){s+='<path d="M'+x+' '+(y+7)+'l-6-7 1.500-1 3 2.500v-8.500h3v8.500l3-2.500 1.500 1z" fill="#f0f"/>';}
[[164,273],[389,323],[413,322],[733,354],[893,324],[1053,450]].forEach(function(a){up(a[0],a[1]);});
[[205,248],[405,313],[526,240],[829,285],[957,301],[30,153]].forEach(function(a){dn(a[0],a[1]);});
document.getElementById('chart').innerHTML=s;
/* condense axis text to match the narrow MT4 glyphs */
function fit(sel,f){document.querySelectorAll(sel).forEach(function(t){var l=t.getComputedTextLength();t.setAttribute('textLength',(l*f).toFixed(1));t.setAttribute('lengthAdjust','spacingAndGlyphs');});}
fit('.ax',.82);fit('.dt',.84);
})();
</script>
</body></html>
